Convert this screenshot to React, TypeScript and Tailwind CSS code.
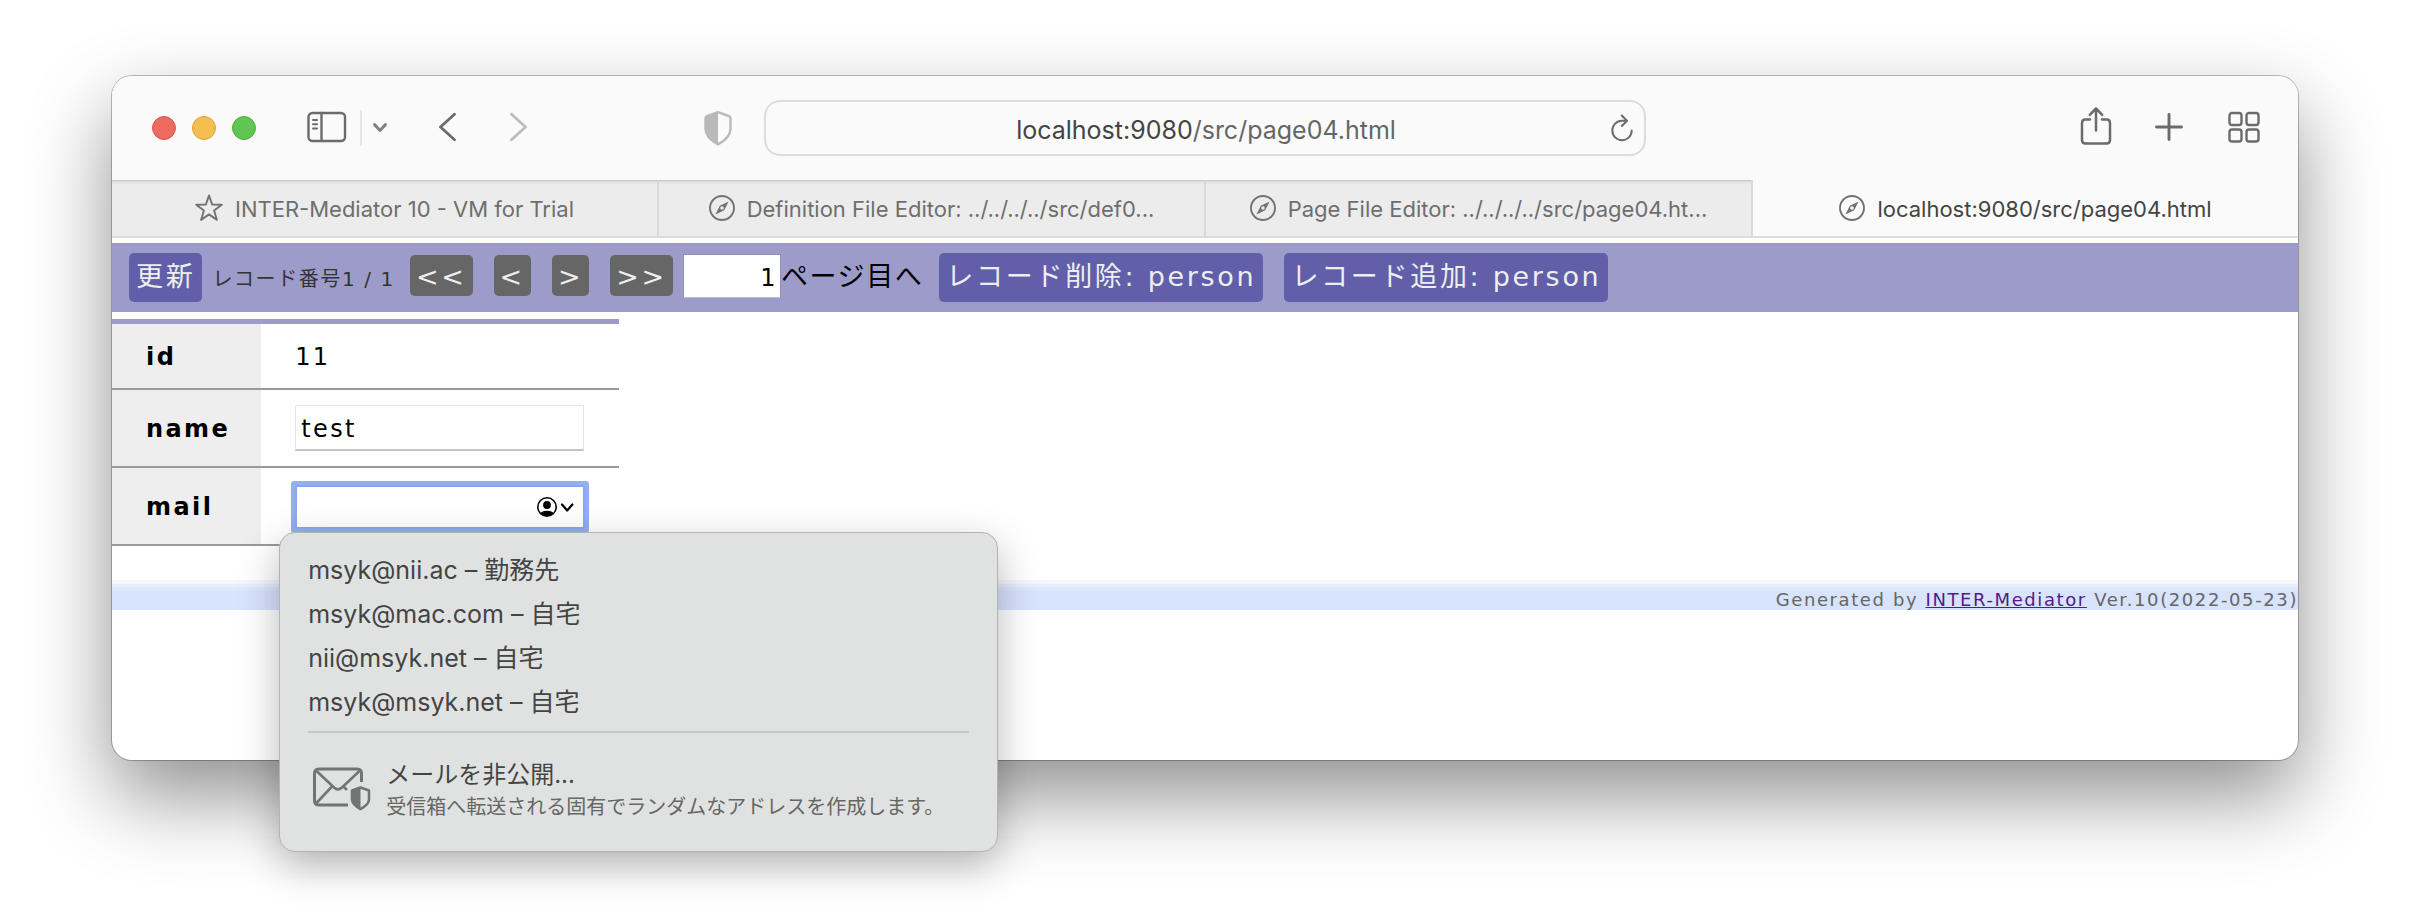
import type { ReactNode } from "react";

const uiFont = "font-['Inter','Noto_Sans_CJK_JP',sans-serif]";
const pageFont = "font-['DejaVu_Sans','Noto_Sans_CJK_JP',sans-serif]";

function SidebarIcon() {
  return (
    <svg width="40" height="32" viewBox="0 0 40 32" fill="none" stroke="currentColor" strokeWidth="2.4" strokeLinecap="round">
      <rect x="1.5" y="2" width="36.5" height="28" rx="4" />
      <path d="M14.5 2v28" />
      <path d="M6 9h4M6 13.3h4M6 17.6h4" strokeWidth="2" />
    </svg>
  );
}

function Chevron({ direction }: { direction: "down" | "left" | "right" }) {
  if (direction === "down") {
    return (
      <svg width="16" height="12" viewBox="0 0 16 12" fill="none" stroke="currentColor" strokeWidth="3" strokeLinecap="round" strokeLinejoin="round">
        <path d="M2.5 2.5 8 8.5l5.5-6" />
      </svg>
    );
  }
  const d = direction === "left" ? "M16.5 2.2 2.5 15l14 12.8" : "M1.5 2.2 15.5 15l-14 12.8";
  return (
    <svg width="18" height="30" viewBox="0 0 18 30" fill="none" stroke="currentColor" strokeWidth="2.8" strokeLinecap="round" strokeLinejoin="round">
      <path d={d} />
    </svg>
  );
}

function ShieldIcon() {
  return (
    <svg width="28" height="36" viewBox="0 0 28 36" fill="none">
      <path d="M14 2.2 25 6.2c1 .4 1.5 1 1.5 2V19c0 6.5-4.5 11-12.5 15.4C6 30 1.5 25.5 1.5 19V8.2c0-1 .5-1.6 1.5-2z" stroke="currentColor" strokeWidth="2.4" strokeLinejoin="round" />
      <path d="M14 2.2v32.2C6 30 1.5 25.5 1.5 19V8.2c0-1 .5-1.6 1.5-2z" fill="currentColor" />
    </svg>
  );
}

function ReloadIcon() {
  return (
    <svg width="24" height="28" viewBox="0 0 24 28" fill="none" stroke="currentColor" strokeWidth="2" strokeLinecap="round" strokeLinejoin="round">
      <path d="M21.7 16.5A9.7 9.7 0 1 1 12 6.8h4.5" />
      <path d="M11.8 1.5 17 6.8l-5.2 5.2" />
    </svg>
  );
}

function ShareIcon() {
  return (
    <svg width="32" height="40" viewBox="0 0 32 40" fill="none" stroke="currentColor" strokeWidth="2.5" strokeLinecap="round" strokeLinejoin="round">
      <path d="M10 13.5H5.5c-2.5 0-3.5 1-3.5 3.5v17c0 2.5 1 3.5 3.5 3.5h21c2.5 0 3.5-1 3.5-3.5V17c0-2.5-1-3.5-3.5-3.5H22" />
      <path d="M16 24.5V3M9.8 8.8 16 2.5l6.2 6.3" />
    </svg>
  );
}

function PlusIcon() {
  return (
    <svg width="28" height="28" viewBox="0 0 28 28" fill="none" stroke="currentColor" strokeWidth="2.9" strokeLinecap="round">
      <path d="M14 1.5v25M1.5 14h25" />
    </svg>
  );
}

function GridIcon() {
  return (
    <svg width="32" height="32" viewBox="0 0 32 32" fill="none" stroke="currentColor" strokeWidth="2.4">
      <rect x="1.5" y="2" width="12" height="12" rx="2.5" />
      <rect x="18.5" y="2" width="12" height="12" rx="2.5" />
      <rect x="1.5" y="18.5" width="12" height="12" rx="2.5" />
      <rect x="18.5" y="18.5" width="12" height="12" rx="2.5" />
    </svg>
  );
}

function StarIcon() {
  return (
    <svg width="28" height="28" viewBox="0 0 28 28" fill="none" stroke="currentColor" strokeWidth="1.9" strokeLinejoin="round">
      <path d="M14 1.5 17.2 10.6 26.8 10.8 19.1 16.6 21.9 25.9 14 20.4 6.1 25.9 8.9 16.6 1.2 10.8 10.8 10.6z" />
    </svg>
  );
}

function CompassIcon() {
  return (
    <svg width="26" height="26" viewBox="0 0 26 26" fill="none">
      <circle cx="13" cy="13" r="12" stroke="currentColor" strokeWidth="1.9" />
      <path fillRule="evenodd" d="M19.6 6.4 15.2 15.2 6.4 19.6 10.8 10.8zM13 11.2a1.8 1.8 0 1 0 0 3.6 1.8 1.8 0 0 0 0-3.6z" fill="currentColor" />
    </svg>
  );
}

function ContactIcon() {
  return (
    <svg width="38" height="22" viewBox="0 0 38 22" fill="none">
      <clipPath id="contact-circle">
        <circle cx="11" cy="11" r="9" />
      </clipPath>
      <circle cx="11" cy="11" r="9.2" stroke="currentColor" strokeWidth="1.6" />
      <circle cx="11" cy="9" r="3.9" fill="currentColor" />
      <ellipse cx="11" cy="19.5" rx="7.5" ry="4.8" fill="currentColor" clipPath="url(#contact-circle)" />
      <path d="M26 8.5 31.2 14.5 36.4 8.5" stroke="currentColor" strokeWidth="2.2" strokeLinecap="round" strokeLinejoin="round" />
    </svg>
  );
}

function PrivateMailIcon() {
  return (
    <svg width="60" height="44" viewBox="0 0 60 44" fill="none" stroke="currentColor" strokeWidth="3" strokeLinejoin="round">
      <path d="M49.500 15V6.500c0-3-1.500-4.500-4.500-4.500H7C4 2 2.500 3.500 2.500 6.500v27C2.500 36.500 4 38 7 38h29" />
      <path d="M4 3.500 22 20.500c2.700 2.500 5.300 2.500 8 0L48 3.500M4 36.500 19.500 20M32 20l3 3" strokeWidth="2.6" />
      <path d="M48.500 20.500 57 23.500v9c0 4-3 6.500-8.500 9.500C43 39 40 36.500 40 32.500v-9z" strokeWidth="2.6" />
      <path d="M48.500 20.500V42C43 39 40 36.500 40 32.500v-9z" fill="currentColor" stroke="none" />
    </svg>
  );
}

function Tab({ icon, title, active = false }: { icon: ReactNode; title: string; active?: boolean }) {
  return (
    <button
      type="button"
      role="tab"
      aria-selected={active}
      className={
        active
          ? "flex h-14 min-w-0 flex-1 items-center justify-center gap-3 bg-[#fafafa] text-[#444]"
          : "flex h-14 min-w-0 flex-1 items-center justify-center gap-3 border-r-2 border-[#d9d9d9] bg-[#ececec] bg-[linear-gradient(#c8c8c8_0_1px,#dedede_1px,#ececec_5px)] text-[#6e6e6e]"
      }
    >
      <span className="shrink-0 text-[#727272]">{icon}</span>
      <span className="truncate pt-[2px] text-[22px] leading-8">{title}</span>
    </button>
  );
}

function BrowserToolbar() {
  return (
    <header className="grid h-[104px] grid-cols-[1fr_minmax(0,882px)_1fr] items-center rounded-t-[20px] bg-[#fafafa] text-[#6b6b6b]">
      <div className="flex items-center pl-10">
        <div className="flex gap-4">
          <button type="button" aria-label="Close" className="size-6 rounded-full border border-[#d9564b] bg-[#ec6a5e]" />
          <button type="button" aria-label="Minimize" className="size-6 rounded-full border border-[#d8a13b] bg-[#f5bf4f]" />
          <button type="button" aria-label="Zoom" className="size-6 rounded-full border border-[#4fad3f] bg-[#61c554]" />
        </div>
        <button type="button" aria-label="Sidebar" className="ml-[51px] pb-[2px]"><SidebarIcon /></button>
        <div className="ml-[13px] h-9 w-[2px] bg-[#e6e6e6]" />
        <button type="button" aria-label="Tab groups" className="ml-[10px] text-[#818185]"><Chevron direction="down" /></button>
        <button type="button" aria-label="Back" className="ml-[50px] pb-[2px]"><Chevron direction="left" /></button>
        <button type="button" aria-label="Forward" className="ml-[54px] pb-[2px] text-[#bcbcbc]"><Chevron direction="right" /></button>
        <button type="button" aria-label="Privacy report" className="mr-8 ml-auto text-[#b9b9b9]"><ShieldIcon /></button>
      </div>
      <div className="flex h-14 items-center rounded-[16px] border-2 border-[#dcdcdc] pr-[10px]">
        <button type="button" className="flex-1 pt-[3px] pl-9 text-center text-[25px] leading-8 text-[#666]">
          <span className="text-[#444]">localhost:9080</span>/src/page04.html
        </button>
        <button type="button" aria-label="Reload" className="pb-px"><ReloadIcon /></button>
      </div>
      <div className="flex items-center justify-end gap-[43px] pr-[38px]">
        <button type="button" aria-label="Share" className="pb-[5px]"><ShareIcon /></button>
        <button type="button" aria-label="New tab" className="mr-[2px] pb-[2px]"><PlusIcon /></button>
        <button type="button" aria-label="Tab overview" className="pb-[2px]"><GridIcon /></button>
      </div>
    </header>
  );
}

function TabBar() {
  return (
    <div role="tablist" className="flex border-b-2 border-[#dcdcdc]">
      <Tab icon={<StarIcon />} title="INTER-Mediator 10 - VM for Trial" />
      <Tab icon={<CompassIcon />} title="Definition File Editor: ../../../../src/def0..." />
      <Tab icon={<CompassIcon />} title="Page File Editor: ../../../../src/page04.ht..." />
      <Tab icon={<CompassIcon />} title="localhost:9080/src/page04.html" active />
    </div>
  );
}

function ActionButton({ children }: { children: ReactNode }) {
  return (
    <button type="button" className="rounded-[5px] bg-[#615fa9] px-[7px] pt-[6px] pb-[7px] text-[27px] leading-9 tracking-widest text-[#eee]">
      {children}
    </button>
  );
}

function PagerButton({ label, children }: { label: string; children: ReactNode }) {
  return (
    <button type="button" aria-label={label} className="rounded-[5px] bg-[#666] px-[6px] pt-1 pb-px text-[27px] leading-9 tracking-widest text-[#eee]">
      {children}
    </button>
  );
}

function RecordNavigation() {
  return (
    <nav className="mt-[5px] flex h-[69px] items-baseline bg-[#9c9bc9] pt-[10px] pl-[17px] whitespace-nowrap">
      <ActionButton>更新</ActionButton>
      <span className="mr-[15px] ml-[10px] text-xl leading-9 text-[#333]">レコード番号1 / 1</span>
      <div className="flex items-baseline gap-[21px]">
        <PagerButton label="First">&lt;&lt;</PagerButton>
        <PagerButton label="Previous">&lt;</PagerButton>
        <PagerButton label="Next">&gt;</PagerButton>
        <PagerButton label="Last">&gt;&gt;</PagerButton>
      </div>
      <input
        id="page"
        defaultValue="1"
        className="ml-[10px] h-11 w-[98px] border border-[#9090bb] border-b-[#c0c0c0] bg-white pt-1 pr-[2px] text-right text-2xl tracking-widest text-black"
      />
      <label htmlFor="page" className="text-[27px] leading-9 text-black">ページ目へ</label>
      <div className="ml-4 flex items-baseline gap-[21px]">
        <ActionButton>レコード削除: person</ActionButton>
        <ActionButton>レコード追加: person</ActionButton>
      </div>
    </nav>
  );
}

const suggestions = ["msyk@nii.ac – 勤務先", "msyk@mac.com – 自宅", "nii@msyk.net – 自宅", "msyk@msyk.net – 自宅"];

function AutofillMenu() {
  return (
    <div
      className={`absolute top-full -left-4 z-10 mt-[3px] w-[719px] rounded-[16px] border border-[#b2b3b3] bg-[#e0e2e1] px-7 pt-[15px] pb-[30px] tracking-normal text-[#444] shadow-[0_14px_40px_rgba(0,0,0,0.28)] ${uiFont}`}
    >
      <ul>
        {suggestions.map((s) => (
          <li key={s}>
            <button type="button" className="block h-11 w-full text-left text-[25px] leading-9">{s}</button>
          </li>
        ))}
      </ul>
      <hr className="mt-[7px] border-t-2 border-[#c6c8c7]" />
      <button type="button" className="mt-6 flex w-full items-center gap-[14px] pl-1 text-left">
        <span className="shrink-0 text-[#737474]"><PrivateMailIcon /></span>
        <span className="flex flex-col">
          <span className="text-2xl leading-9">メールを非公開...</span>
          <span className="text-xl leading-7 text-[#666]">受信箱へ転送される固有でランダムなアドレスを作成します。</span>
        </span>
      </button>
    </div>
  );
}

function RecordTable() {
  const th = "bg-[#eee] pt-[3px] pr-[31px] pl-[34px] text-left align-middle font-bold";
  const td = "pr-[34px] pl-[34px]";
  return (
    <table className="mt-[7px] border-collapse border-t-[5px] border-[#9c9bc9] text-2xl tracking-widest text-black">
      <tbody>
        <tr className="h-[67px] border-b-2 border-[#999]">
          <th scope="row" className={th}>id</th>
          <td className="pt-[3px] pr-[34px] pl-[34px]">11</td>
        </tr>
        <tr className="h-[78px] border-b-2 border-[#999]">
          <th scope="row" className={th}><label htmlFor="name">name</label></th>
          <td className={td}>
            <input
              id="name"
              defaultValue="test"
              className="block h-[46px] w-[289px] border border-[#e6e6e6] border-b-2 border-b-[#c4c4c4] px-[5px] pt-[3px] tracking-widest"
            />
          </td>
        </tr>
        <tr className="h-[78px] border-b-2 border-[#999]">
          <th scope="row" className={th}><label htmlFor="mail">mail</label></th>
          <td className={td}>
            <div className="relative mt-[2px]">
              <input
                id="mail"
                className="block h-11 w-[290px] rounded-[1px] border-2 border-[#8aa7ea] pt-[3px] pr-12 pl-[5px] tracking-widest ring-4 ring-[#93aff2] outline-none"
              />
              <button type="button" aria-label="Contacts" className="absolute inset-y-0 right-[11px] flex items-center">
                <ContactIcon />
              </button>
              <AutofillMenu />
            </div>
          </td>
        </tr>
      </tbody>
    </table>
  );
}

export default function App() {
  return (
    <div className={`min-h-screen bg-white px-28 pt-19 ${uiFont}`}>
      <div className="rounded-[20px] bg-white pb-[150px] shadow-[0_0_0_1px_rgba(0,0,0,0.25),0_36px_82px_rgba(0,0,0,0.44)]">
        <BrowserToolbar />
        <TabBar />
        <main className={`tracking-widest ${pageFont}`}>
          <RecordNavigation />
          <RecordTable />
          <footer className="mt-[34px] bg-[linear-gradient(#f5f5ff_0_4px,#e9eefd_4px_7px,#e0e8fc_7px_10px,#d8e3fc_10px)] pt-[10px] text-right text-[18px] leading-5 text-[#666]">
            Generated by <a href="https://inter-mediator.org/" className="text-[#551a8b] underline">INTER-Mediator</a> Ver.10(2022-05-23)
          </footer>
        </main>
      </div>
    </div>
  );
}
